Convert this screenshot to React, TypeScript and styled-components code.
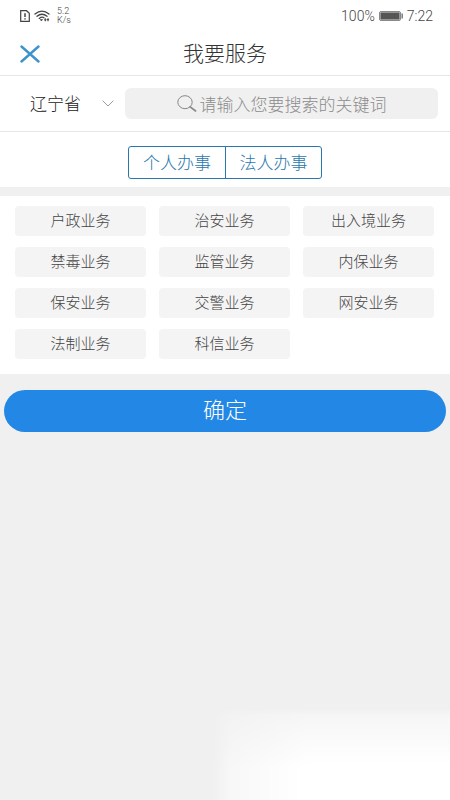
import React from "react";
import styled, { createGlobalStyle } from "styled-components";

const GlobalStyle = createGlobalStyle`
  *, *::before, *::after { box-sizing: border-box; }
  body {
    margin: 0;
    background: #f0f0f0;
    font-family: Roboto, "Noto Sans CJK SC", sans-serif;
    font-weight: 300;
  }
  button, input, select { font-family: inherit; font-weight: inherit; margin: 0; }
`;

const Page = styled.div`
  display: flex;
  flex-direction: column;
  min-height: 100vh;
`;

const StatusBar = styled.div`
  display: flex;
  align-items: center;
  justify-content: space-between;
  height: 32px;
  padding: 0 17px 0 20px;
  background: #fff;
  color: #444;
`;

const StatusGroup = styled.div`
  display: flex;
  align-items: center;
  gap: 4px;
  font-size: 14px;
  line-height: 16px;
`;

const NetSpeed = styled.div`
  margin-left: 3px;
  font-size: 9px;
  line-height: 9px;
`;

const Header = styled.header`
  display: grid;
  grid-template-columns: 60px 1fr 60px;
  align-items: center;
  height: 44px;
  background: #fff;
  border-bottom: 1px solid #e6e6e6;
`;

const CloseButton = styled.button`
  display: flex;
  align-items: center;
  justify-content: center;
  height: 40px;
  padding: 0;
  border: 0;
  background: none;
`;

const Title = styled.h1`
  margin: 0;
  font-size: 21px;
  line-height: 28px;
  font-weight: inherit;
  text-align: center;
  color: #333;
`;

const SearchRow = styled.div`
  display: flex;
  align-items: center;
  height: 56px;
  padding: 0 12px 0 30px;
  background: #fff;
  border-bottom: 1px solid #e6e6e6;
`;

const RegionPicker = styled.label`
  display: flex;
  align-items: center;
  justify-content: space-between;
  flex: none;
  width: 84px;
  margin-right: 11px;
`;

const RegionSelect = styled.select`
  appearance: none;
  padding: 0;
  border: 0;
  background: none;
  color: #222;
  font-size: 17px;
  line-height: 24px;
`;

const SearchBox = styled.label`
  display: flex;
  align-items: center;
  justify-content: center;
  gap: 3px;
  flex: 1;
  min-width: 0;
  height: 31px;
  border-radius: 6px;
  background: #f0f0f0;
`;

const SearchInput = styled.input`
  field-sizing: content;
  min-width: 0;
  padding: 0;
  border: 0;
  outline: 0;
  background: none;
  color: #333;
  font-size: 17px;
  line-height: 24px;
  &::placeholder { color: #8c8c8c; opacity: 1; }
`;

const TabRow = styled.div`
  display: flex;
  justify-content: center;
  padding: 14px 0 8px;
  background: #fff;
`;

const Segmented = styled.div`
  display: flex;
  border: 1px solid #2878ad;
  border-radius: 3px;
`;

const Segment = styled.button`
  width: 96px;
  height: 31px;
  padding: 0;
  border: 0;
  background: none;
  color: #2878ad;
  font-size: 17px;
  line-height: 24px;
  & + & { border-left: 1px solid #2878ad; }
`;

const ServicePanel = styled.section`
  display: grid;
  grid-template-columns: repeat(3, 1fr);
  gap: 11px 13px;
  margin-top: 9px;
  padding: 10px 16px 15px 15px;
  background: #fff;
`;

const ServiceButton = styled.button`
  height: 30px;
  padding: 0;
  border: 0;
  border-radius: 4px;
  background: #f4f4f4;
  color: #444;
  font-size: 15px;
  line-height: 20px;
`;

const ConfirmButton = styled.button`
  height: 42px;
  margin: 16px 4px;
  padding: 0;
  border: 0;
  border-radius: 21px;
  background: #2287e5;
  color: #fff;
  font-size: 22px;
  line-height: 30px;
`;

const CornerGlow = styled.div`
  align-self: flex-end;
  width: 53%;
  height: 92px;
  margin-top: auto;
  background: #fff;
  mask-image:
    linear-gradient(to right, transparent, rgba(0, 0, 0, 0.5) 8%, #000 40%),
    linear-gradient(to bottom, transparent, rgba(0, 0, 0, 0.4) 8%, #000 65%);
  mask-composite: intersect;
`;

const services = [
  "户政业务", "治安业务", "出入境业务",
  "禁毒业务", "监管业务", "内保业务",
  "保安业务", "交警业务", "网安业务",
  "法制业务", "科信业务",
];

const SimIcon = () => (
  <svg width="10" height="12" viewBox="0 0 10 12" fill="none" stroke="#444" aria-hidden="true">
    <path d="M.7 .7H6.5L9.3 3.2V11.3H.7Z" strokeWidth="1.2" />
    <path d="M5 3.2V7M5 8.2V9.6" strokeWidth="1.5" />
  </svg>
);

const WifiIcon = () => (
  <svg width="16" height="12" viewBox="0 0 16 12" fill="none" stroke="#444" aria-hidden="true">
    <path d="M1 4Q8-1.8 15 4M3 6.3Q8 2.2 13 6.3M5.2 8.4Q8 6.2 10 7.7" strokeWidth="1.3" strokeLinecap="round" />
    <path d="M6.2 9.5H8.6L7.4 11Z" fill="#444" strokeWidth=".6" />
    <path d="M11.3 8.2V11.2M14 8.2V11.2" strokeWidth="1.1" />
    <path d="M10.2 9.8H12.4M12.9 9.6H15.1" strokeWidth="1" />
  </svg>
);

const BatteryIcon = () => (
  <svg width="24" height="10" viewBox="0 0 24 10" aria-hidden="true">
    <rect x=".5" y=".5" width="21" height="9" rx="1.5" fill="#ddd" stroke="#888" />
    <rect x="1.5" y="1.5" width="19" height="7" fill="#555" />
    <rect x="22.5" y="2.5" width="1.3" height="5" fill="#666" />
  </svg>
);

const CloseIcon = () => (
  <svg width="20" height="18" viewBox="0 0 20 18" fill="none" stroke="#3d92cd" strokeWidth="2.4" strokeLinecap="round" aria-hidden="true">
    <path d="M1.5 1.5L18.5 16.5M18.5 1.5L1.5 16.5" />
  </svg>
);

const ChevronIcon = () => (
  <svg width="12" height="7" viewBox="0 0 12 7" fill="none" stroke="#999" aria-hidden="true">
    <path d="M.6 .7L6 6L11.4 .7" />
  </svg>
);

const MagnifierIcon = () => (
  <svg width="20" height="17" viewBox="0 0 20 17" fill="none" stroke="#888" aria-hidden="true">
    <ellipse cx="8" cy="7.2" rx="7.2" ry="6.5" />
    <path d="M13.2 11.8L18.6 16" strokeWidth="1.6" strokeLinecap="round" />
  </svg>
);

export default function App() {
  return (
    <>
      <GlobalStyle />
      <Page>
        <StatusBar>
          <StatusGroup>
            <SimIcon />
            <WifiIcon />
            <NetSpeed>5.2<br />K/s</NetSpeed>
          </StatusGroup>
          <StatusGroup>
            <span>100%</span>
            <BatteryIcon />
            <span>7:22</span>
          </StatusGroup>
        </StatusBar>
        <Header>
          <CloseButton type="button" aria-label="关闭"><CloseIcon /></CloseButton>
          <Title>我要服务</Title>
        </Header>
        <SearchRow>
          <RegionPicker>
            <RegionSelect aria-label="地区" defaultValue="辽宁省">
              <option>辽宁省</option>
            </RegionSelect>
            <ChevronIcon />
          </RegionPicker>
          <SearchBox>
            <MagnifierIcon />
            <SearchInput type="text" aria-label="搜索" placeholder="请输入您要搜索的关键词" />
          </SearchBox>
        </SearchRow>
        <TabRow>
          <Segmented>
            <Segment type="button">个人办事</Segment>
            <Segment type="button">法人办事</Segment>
          </Segmented>
        </TabRow>
        <ServicePanel>
          {services.map((name) => (
            <ServiceButton type="button" key={name}>{name}</ServiceButton>
          ))}
        </ServicePanel>
        <ConfirmButton type="button">确定</ConfirmButton>
        <CornerGlow />
      </Page>
    </>
  );
}
